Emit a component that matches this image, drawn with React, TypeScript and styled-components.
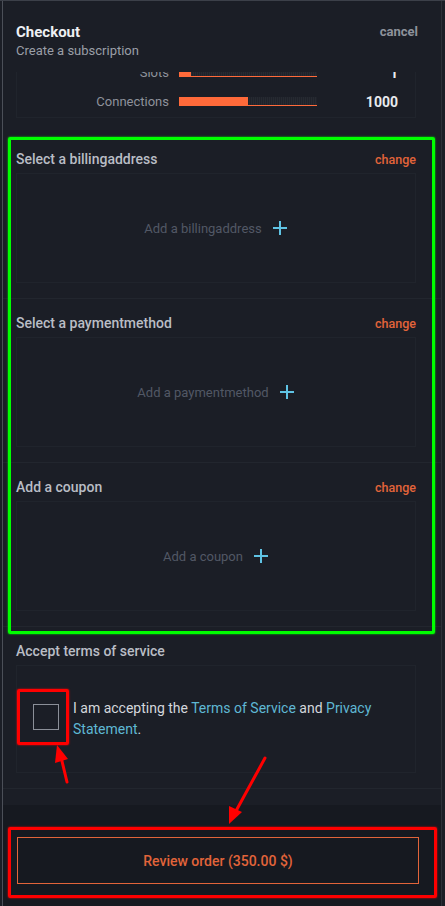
import React, { useLayoutEffect, useRef } from "react";
import styled, { createGlobalStyle } from "styled-components";

const Global = createGlobalStyle`
  html, body { margin: 0; padding: 0; background: #1b1e26; }
  body { font-family: Roboto, "Noto Sans", Arial, sans-serif; -webkit-font-smoothing: antialiased; }
  * { box-sizing: border-box; }
`;

const Frame = styled.div`
  position: relative;
  width: 445px;
  height: 906px;
  background: #1b1e26;
  border-top: 1px solid #3c4049;
  overflow: hidden;
`;

const Panel = styled.div`
  margin-left: 2px;
  width: 440px;
  height: 905px;
  display: flex;
  flex-direction: column;
  background: #1b1e26;
  border-left: 1px solid #4b4f58;
  border-right: 1px solid #2c3038;
`;

const Header = styled.div`
  height: 71px;
  flex: none;
  display: flex;
  justify-content: space-between;
  align-items: flex-start;
  padding: 22px 23px 0 13px;
`;

const TitleBlock = styled.div`
  display: flex;
  flex-direction: column;
  gap: 2px;
`;

const Title = styled.div`
  font-size: 15px;
  font-weight: 700;
  color: #eef0f3;
  line-height: 18px;
`;

const Subtitle = styled.div`
  font-size: 13px;
  color: #9a9ea7;
  line-height: 16px;
`;

const Cancel = styled.div`
  font-size: 13px;
  font-weight: 700;
  color: #8e929b;
  padding-top: 1px;
`;

const Scroll = styled.div`
  flex: 1;
  overflow: hidden;
  position: relative;
`;

const ScrollContent = styled.div`
  padding-bottom: 60px;
`;

const StatsCard = styled.div`
  margin: 0 25px 17px 13px;
  border: 1px solid #20242c;
  border-top: none;
  padding: 0 0 1px;
  display: flex;
  flex-direction: column;
`;

const StatRow = styled.div`
  height: 29px;
  display: grid;
  grid-template-columns: 152px 138px 1fr;
  column-gap: 10px;
  align-items: center;
  padding-right: 17px;
`;

const StatLabel = styled.div`
  text-align: right;
  font-size: 13px;
  color: #8e929b;
`;

const Bar = styled.div`
  height: 9px;
  background: repeating-linear-gradient(90deg, #262a31 0 1px, #1f222a 1px 2px);
  border-bottom: 1px solid #ff6a3a;
  display: flex;
`;

const BarFill = styled.div`
  height: 100%;
  background: #ff6a3a;
`;

const StatValue = styled.div`
  text-align: right;
  font-size: 14px;
  font-weight: 700;
  color: #e9ebee;
`;

const Section = styled.div`
  padding: 14px 25px 15px 13px;
  border-bottom: 1px solid #22262e;
  display: flex;
  flex-direction: column;
  gap: 4px;
`;

const SectionHead = styled.div`
  height: 20px;
  display: flex;
  justify-content: space-between;
  align-items: center;
`;

const SectionTitle = styled.div`
  font-size: 14px;
  font-weight: 500;
  color: #b9bdc5;
`;

const Change = styled.div`
  font-size: 12.5px;
  font-weight: 500;
  color: #e2643a;
`;

const EmptyBox = styled.div`
  height: 110px;
  border: 1px solid #20242c;
  display: flex;
  align-items: center;
  justify-content: center;
  gap: 10px;
  font-size: 13px;
  color: #525865;
`;

const TermsBox = styled.div`
  height: 108px;
  border: 1px solid #20242c;
  display: flex;
  align-items: center;
  gap: 14px;
  padding: 0 16px;
`;

const CheckBox = styled.div`
  flex: none;
  width: 26px;
  height: 26px;
  border: 1.5px solid #8b8f98;
  margin-top: -4px;
`;

const TermsText = styled.div`
  font-size: 14px;
  line-height: 21px;
  color: #d4d7dc;
`;

const Link = styled.span`
  color: #5fb8d4;
`;

const Footer = styled.div`
  flex: none;
  height: 101px;
  background: #161920;
  padding: 32px 22px 0 14px;
`;

const ReviewButton = styled.div`
  height: 47px;
  border: 1.5px solid #e2643a;
  display: flex;
  align-items: center;
  justify-content: center;
  font-size: 14px;
  font-weight: 500;
  color: #e2643a;
`;

const Mark = styled.div<{ $c: string; $x: number; $y: number; $w: number; $h: number }>`
  position: absolute;
  left: ${(p) => p.$x}px;
  top: ${(p) => p.$y}px;
  width: ${(p) => p.$w}px;
  height: ${(p) => p.$h}px;
  border: 3px solid ${(p) => p.$c};
  border-radius: 2px;
  box-shadow: 0 0 2px ${(p) => p.$c};
  pointer-events: none;
`;

const Arrows = styled.svg`
  position: absolute;
  left: 0;
  top: 0;
  pointer-events: none;
`;

const Plus = () => (
  <svg width="16" height="16" viewBox="0 0 16 16">
    <path d="M8 1v14M1 8h14" stroke="#5fc3e4" strokeWidth="2" />
  </svg>
);

const stats = [
  { label: "Storage", pct: 30, value: "50" },
  { label: "Users", pct: 20, value: "10" },
  { label: "Slots", pct: 9, value: "1" },
  { label: "Connections", pct: 50, value: "1000" },
];

const sections = [
  { title: "Select a billingaddress", empty: "Add a billingaddress" },
  { title: "Select a paymentmethod", empty: "Add a paymentmethod" },
  { title: "Add a coupon", empty: "Add a coupon" },
];

export default function App() {
  const scrollRef = useRef<HTMLDivElement>(null);
  const cardRef = useRef<HTMLDivElement>(null);

  useLayoutEffect(() => {
    const s = scrollRef.current;
    const c = cardRef.current;
    if (s && c) s.scrollTop = c.offsetTop + c.offsetHeight - 46;
  }, []);

  return (
    <Frame>
      <Global />
      <Panel>
        <Header>
          <TitleBlock>
            <Title>Checkout</Title>
            <Subtitle>Create a subscription</Subtitle>
          </TitleBlock>
          <Cancel>cancel</Cancel>
        </Header>
        <Scroll ref={scrollRef}>
          <ScrollContent>
            <StatsCard ref={cardRef}>
              {stats.map((s) => (
                <StatRow key={s.label}>
                  <StatLabel>{s.label}</StatLabel>
                  <Bar>
                    <BarFill style={{ width: `${s.pct}%` }} />
                  </Bar>
                  <StatValue>{s.value}</StatValue>
                </StatRow>
              ))}
            </StatsCard>
            {sections.map((sec) => (
              <Section key={sec.title}>
                <SectionHead>
                  <SectionTitle>{sec.title}</SectionTitle>
                  <Change>change</Change>
                </SectionHead>
                <EmptyBox>
                  {sec.empty}
                  <Plus />
                </EmptyBox>
              </Section>
            ))}
            <Section>
              <SectionHead>
                <SectionTitle>Accept terms of service</SectionTitle>
              </SectionHead>
              <TermsBox>
                <CheckBox />
                <TermsText>
                  I am accepting the <Link>Terms of Service</Link> and <Link>Privacy Statement</Link>.
                </TermsText>
              </TermsBox>
            </Section>
          </ScrollContent>
        </Scroll>
        <Footer>
          <ReviewButton>Review order (350.00 $)</ReviewButton>
        </Footer>
      </Panel>

      <Mark $c="#00ff00" $x={8} $y={136} $w={427} $h={497} />
      <Mark $c="#ff0000" $x={17} $y={688} $w={52} $h={56} />
      <Mark $c="#ff0000" $x={8} $y={826} $w={429} $h={71} />
      <Arrows width="445" height="906" viewBox="0 0 445 906">
        <g stroke="#ff0000" strokeWidth="3" strokeLinecap="round">
          <line x1="67" y1="781" x2="61" y2="756" />
          <line x1="265" y1="757" x2="236" y2="810" />
        </g>
        <g fill="#ff0000">
          <polygon points="57,744 55,762 68,758" />
          <polygon points="229,823 229,805 242,811" />
        </g>
      </Arrows>
    </Frame>
  );
}
